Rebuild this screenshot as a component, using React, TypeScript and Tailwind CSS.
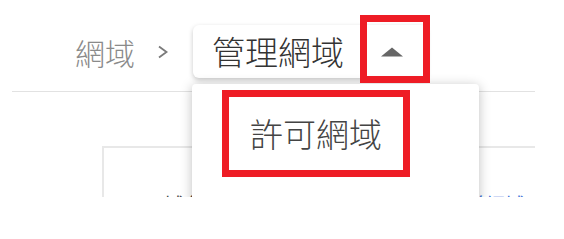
import React from 'react';

const font = { fontFamily: '"Noto Sans CJK TC", "Noto Sans", sans-serif' };

export default function App() {
  return (
    <div className="relative w-[564px] h-[239px] bg-white" style={font}>
      <div className="relative h-[197px] overflow-hidden">
        {/* breadcrumb */}
        <div className="flex items-center pt-[25px] pl-[75px] h-[78px]">
          <span className="text-[30px] font-light leading-none text-[#8a8a8a]">網域</span>
          <svg className="ml-[22px] mr-[24px]" width="12" height="14" viewBox="0 0 12 14">
            <path d="M2 1.5 L9.5 7 L2 12.5" fill="none" stroke="#7a7a7a" strokeWidth="1.8" />
          </svg>
          <div className="flex items-center h-[53px] w-[234px] rounded-[6px] bg-white shadow-[0_2px_5px_rgba(0,0,0,0.22)]">
            <span className="ml-[19px] text-[33px] font-light leading-none text-[#333]">管理網域</span>
            <svg className="ml-[37px]" width="22" height="10" viewBox="0 0 22 10">
              <path d="M0 9.5 L11 0.5 L22 9.5 Z" fill="#666" />
            </svg>
          </div>
        </div>

        {/* divider */}
        <div className="ml-[12px] mt-[13px] w-[523px] border-t border-[#e2e2e2]" />

        {/* card */}
        <div className="ml-[102px] mt-[54px] w-[433px] h-[80px] border-t-2 border-l-2 border-[#e8e8e8]">
          <div className="flex justify-between pt-[47px] pl-[60px] pr-[10px] text-[20px] leading-none">
            <span className="text-[#444]">域名</span>
            <span className="text-[#3b6fd8]">新增網域</span>
          </div>
        </div>

        {/* dropdown menu */}
        <div className="absolute left-[192px] top-[84px] w-[287px] h-[140px] rounded-t-[4px] bg-white shadow-[0_2px_12px_rgba(0,0,0,0.25)]">
          <div className="ml-[30px] mt-[6px] w-[188px] h-[87px] border-[7px] border-[#ee1c25] flex items-center justify-center">
            <span className="text-[33px] font-light leading-none text-[#444]">許可網域</span>
          </div>
        </div>
      </div>

      {/* highlight on toggle */}
      <div className="absolute left-[360px] top-[15px] w-[70px] h-[68px] border-[7px] border-[#ee1c25]" />
    </div>
  );
}
